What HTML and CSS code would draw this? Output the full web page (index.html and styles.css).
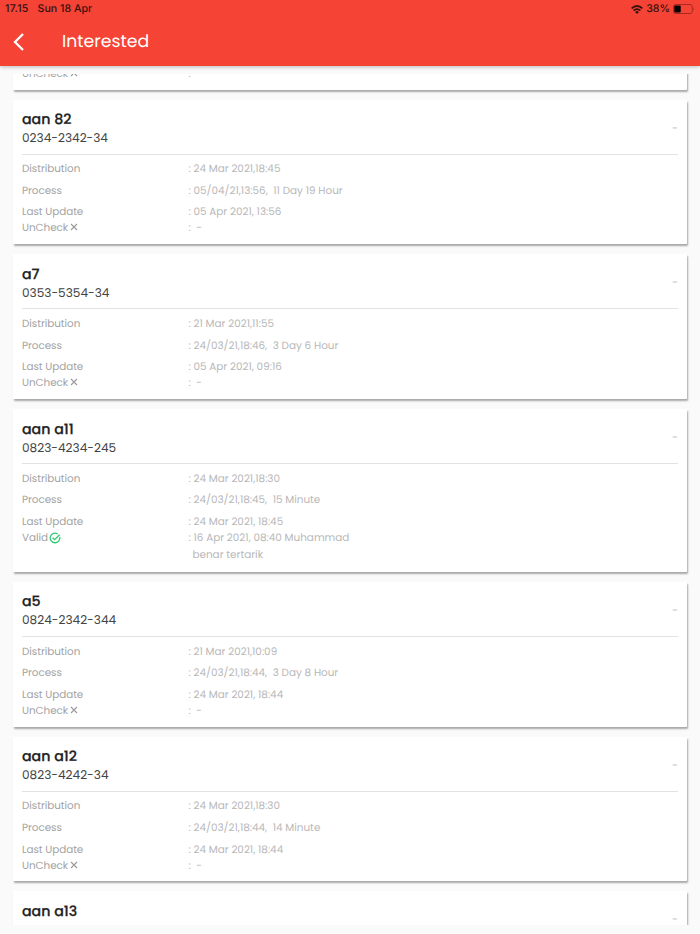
FILE: index.html
```html
<!DOCTYPE html>
<html lang="en">
<head>
    <meta charset="utf-8">
    <title>Interested</title>
    <link rel="stylesheet" href="styles.css">
</head>
<body>
    <header class="app-bar">
        <div class="status-bar">
            <span class="clock">17.15</span>
            <span class="date">Sun 18 Apr</span>
            <svg class="wifi" width="12" height="9" viewBox="0 0 12 9" fill="none" stroke="#35100d" stroke-width="1.7">
                <path d="M0.6 3.3Q6 -1.3 11.4 3.3"/>
                <path d="M2.6 5.5Q6 2.6 9.4 5.5"/>
                <path d="M4.1 6.9Q6 5.3 7.9 6.9L6 8.9Z" fill="#35100d" stroke="none"/>
            </svg>
            <span class="percent">38%</span>
            <svg class="battery" width="22" height="10" viewBox="0 0 22 10">
                <rect x="0.5" y="0.5" width="18.8" height="9" rx="2.3" fill="none" stroke="#a52b22"/>
                <rect x="1.3" y="1.6" width="6.4" height="6.8" rx="1" fill="#000"/>
                <path d="M20.4 3.4Q21.8 5 20.4 6.6Z" fill="#a52b22"/>
            </svg>
        </div>
        <div class="title-bar">
            <svg class="back" width="12" height="18" viewBox="0 0 12 18" fill="none" stroke="#fff" stroke-width="2.3">
                <path d="M10 1L2 9L10 17"/>
            </svg>
            <h1>Interested</h1>
        </div>
    </header>

    <main class="list">
        <section class="card">
            <div class="card-head">
                <h2>aan a9</h2>
                <p>0823-4242-34</p>
                <span class="dash">-</span>
            </div>
            <dl>
                <dt>Distribution</dt><dd>: 24 Mar 2021,18:30</dd>
                <dt>Process</dt><dd>: 24/03/21,18:45,&nbsp; 15 Minute</dd>
                <dt>Last Update</dt><dd>: 24 Mar 2021, 18:45</dd>
                <dt class="check">UnCheck <svg class="cross" viewBox="0 0 8 8"><path d="M1 1L7 7M7 1L1 7"/></svg></dt><dd class="check">:&nbsp; -</dd>
            </dl>
        </section>

        <section class="card">
            <div class="card-head">
                <h2>aan 82</h2>
                <p>0234-2342-34</p>
                <span class="dash">-</span>
            </div>
            <dl>
                <dt>Distribution</dt><dd>: 24 Mar 2021,18:45</dd>
                <dt>Process</dt><dd>: 05/04/21,13:56,&nbsp; 11 Day 19 Hour</dd>
                <dt>Last Update</dt><dd>: 05 Apr 2021, 13:56</dd>
                <dt class="check">UnCheck <svg class="cross" viewBox="0 0 8 8"><path d="M1 1L7 7M7 1L1 7"/></svg></dt><dd class="check">:&nbsp; -</dd>
            </dl>
        </section>

        <section class="card">
            <div class="card-head">
                <h2>a7</h2>
                <p>0353-5354-34</p>
                <span class="dash">-</span>
            </div>
            <dl>
                <dt>Distribution</dt><dd>: 21 Mar 2021,11:55</dd>
                <dt>Process</dt><dd>: 24/03/21,18:46,&nbsp; 3 Day 6 Hour</dd>
                <dt>Last Update</dt><dd>: 05 Apr 2021, 09:16</dd>
                <dt class="check">UnCheck <svg class="cross" viewBox="0 0 8 8"><path d="M1 1L7 7M7 1L1 7"/></svg></dt><dd class="check">:&nbsp; -</dd>
            </dl>
        </section>

        <section class="card">
            <div class="card-head">
                <h2>aan a11</h2>
                <p>0823-4234-245</p>
                <span class="dash">-</span>
            </div>
            <dl>
                <dt>Distribution</dt><dd>: 24 Mar 2021,18:30</dd>
                <dt>Process</dt><dd>: 24/03/21,18:45,&nbsp; 15 Minute</dd>
                <dt>Last Update</dt><dd>: 24 Mar 2021, 18:45</dd>
                <dt class="check">Valid<svg class="valid" viewBox="0 0 12 12"><path d="M10.7 5A4.8 4.8 0 1 1 8.7 2M3.6 5.7L5.6 7.7L10.6 2.7"/></svg></dt>
                <dd class="check">: 16 Apr 2021, 08:40 Muhammad<span class="note">benar tertarik</span></dd>
            </dl>
        </section>

        <section class="card">
            <div class="card-head">
                <h2>a5</h2>
                <p>0824-2342-344</p>
                <span class="dash">-</span>
            </div>
            <dl>
                <dt>Distribution</dt><dd>: 21 Mar 2021,10:09</dd>
                <dt>Process</dt><dd>: 24/03/21,18:44,&nbsp; 3 Day 8 Hour</dd>
                <dt>Last Update</dt><dd>: 24 Mar 2021, 18:44</dd>
                <dt class="check">UnCheck <svg class="cross" viewBox="0 0 8 8"><path d="M1 1L7 7M7 1L1 7"/></svg></dt><dd class="check">:&nbsp; -</dd>
            </dl>
        </section>

        <section class="card">
            <div class="card-head">
                <h2>aan a12</h2>
                <p>0823-4242-34</p>
                <span class="dash">-</span>
            </div>
            <dl>
                <dt>Distribution</dt><dd>: 24 Mar 2021,18:30</dd>
                <dt>Process</dt><dd>: 24/03/21,18:44,&nbsp; 14 Minute</dd>
                <dt>Last Update</dt><dd>: 24 Mar 2021, 18:44</dd>
                <dt class="check">UnCheck <svg class="cross" viewBox="0 0 8 8"><path d="M1 1L7 7M7 1L1 7"/></svg></dt><dd class="check">:&nbsp; -</dd>
            </dl>
        </section>

        <section class="card">
            <div class="card-head">
                <h2>aan a13</h2>
                <span class="dash">-</span>
            </div>
        </section>
    </main>
</body>
</html>
```
FILE: styles.css
```css
* {
    box-sizing: border-box;
}

body {
    margin: 0;
    height: 934px;
    overflow: hidden;
    background-color: #fafafa;
    font-family: Poppins, Inter, "Open Sans", sans-serif;
    text-rendering: geometricPrecision;
}

h1, h2, p, dl, dd {
    margin: 0;
}

svg {
    flex: none;
}

.app-bar {
    height: 66px;
    background-color: #f54336;
    box-shadow: 0 1px 4px rgba(0, 0, 0, 0.25);
}

.status-bar {
    display: flex;
    align-items: center;
    height: 18px;
    padding: 0 5px;
    color: #35100d;
    font-family: Inter, "Liberation Sans", sans-serif;
    font-size: 10.6px;
    font-weight: 500;
    line-height: 14px;
}

.clock {
    letter-spacing: 0.25px;
}

.date {
    margin-left: 9px;
}

.wifi {
    margin-left: auto;
    margin-right: 3px;
}

.battery {
    margin-left: 3px;
}

.title-bar {
    display: flex;
    align-items: center;
    height: 47px;
    padding-left: 13px;
}

.title-bar h1 {
    margin-left: 37px;
    padding-top: 1px;
    color: #fff;
    font-size: 17.3px;
    font-weight: 400;
    line-height: 26px;
}

.list {
    height: 851px;
    margin-top: 8px;
    padding: 0 13px;
    overflow: hidden;
}

.card {
    min-height: 144.8px;
    margin-bottom: 10px;
    padding: 0 9px 7.8px;
    background-color: #fff;
    border-radius: 1px;
    box-shadow: 1px 2px 2px rgba(0, 0, 0, 0.33);
}

.card:first-child {
    margin-top: -129.3px;
}

.card-head {
    position: relative;
    height: 55px;
    padding-top: 9.5px;
    border-bottom: 1px solid #e2e2e2;
}

.card-head h2 {
    color: #222;
    font-size: 14.2px;
    font-weight: 500;
    line-height: 20px;
    -webkit-text-stroke: 0.25px #222;
}

.card-head p {
    padding-top: 1px;
    color: #444;
    font-size: 12.1px;
    line-height: 17px;
}

.dash {
    position: absolute;
    top: 20px;
    right: 0;
    color: #bbb;
    font-size: 11px;
    line-height: 16px;
}

dl {
    display: grid;
    grid-template-columns: 166.5px 1fr;
    row-gap: 5.6px;
    padding-top: 6.8px;
    color: #a3a3a3;
    font-size: 10.4px;
    line-height: 16px;
}

dt {
    letter-spacing: -0.05px;
}

dd {
    color: #b8b8b8;
}

.check {
    margin-top: -5.6px;
}

.note {
    display: block;
    padding-left: 4px;
    line-height: 18px;
}

.cross {
    width: 8px;
    height: 8px;
    margin-left: -1px;
    stroke: #999;
    stroke-width: 1.1;
}

.valid {
    width: 12px;
    height: 12px;
    margin-left: 1px;
    vertical-align: -2.5px;
    fill: none;
    stroke: #2ecc71;
    stroke-width: 1.3;
}
```
